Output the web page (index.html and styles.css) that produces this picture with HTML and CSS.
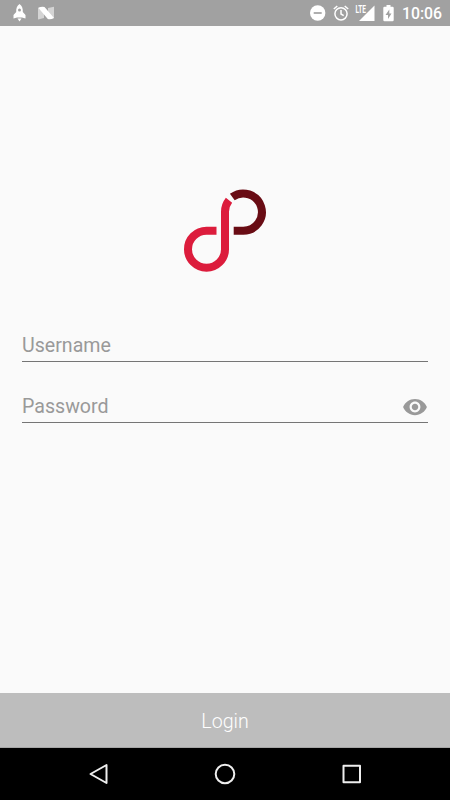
FILE: index.html
```html
<!DOCTYPE html>
<html lang="en">
<head>
  <meta charset="UTF-8" />
  <meta name="viewport" content="width=device-width, initial-scale=1.0"/>
  <title>Login</title>
  <link rel="stylesheet" href="styles.css">
</head>
<body>
  <header class="status-bar">
    <div class="notifications">
      <svg width="14" height="18" viewBox="0 0 14 18" fill="#fff">
        <path fill-rule="evenodd" d="M6.500 0C4 1.500 3 4.500 3.200 8L.5 11V14.500L4 13.500H9L12.500 14.500V11L9.800 8C10 4.500 9 1.500 6.500 0ZM6.500 4.500a1.500 1.500 0 1 1 0 3a1.500 1.500 0 0 1 0-3Z"/>
        <path d="M4.500 14.500H8.500L6.500 17.500Z"/>
      </svg>
      <svg width="17" height="14" viewBox="0 0 17 14">
        <path fill="#d4d4d4" d="M0 2L6 1V12L0 13.500ZM10 2L16 .8V12L10 13Z"/>
        <path fill="#fff" d="M.3 1.800Q3.500 .2 6.500 1L16 12Q12.500 14 9.800 13Z"/>
      </svg>
    </div>
    <div class="system">
      <svg width="16" height="16" viewBox="0 0 16 16">
        <circle cx="7.700" cy="8" r="7.700" fill="#fff"/>
        <path d="M3.700 8H11.700" stroke="#a1a1a1" stroke-width="1.700"/>
      </svg>
      <svg class="alarm" width="16" height="16" viewBox="0 0 16 16" fill="none" stroke="#fff" stroke-width="1.500">
        <circle cx="8" cy="8.800" r="6.100"/>
        <path d="M.8 4L4.300 1M15.200 4L11.700 1M8 5V9L10.700 10.700"/>
      </svg>
      <svg class="signal" width="20" height="17" viewBox="0 0 20 17" fill="#fff">
        <path d="M19.500 .5V16H4Z"/>
        <path class="halo" d="M0 0H11V9H0Z"/>
        <text class="lte" x="0.500" y="8" textLength="10.500" lengthAdjust="spacingAndGlyphs">LTE</text>
      </svg>
      <svg class="battery" width="11" height="17" viewBox="0 0 11 17">
        <path fill="#fff" d="M3.500 0H7.500V1.800H9.500Q10.700 1.800 10.700 3V15Q10.700 16.200 9.500 16.200H1.500Q.3 16.200 .3 15V3Q.3 1.800 1.500 1.800H3.500Z"/>
        <path fill="#a1a1a1" d="M6.300 4.500L2.500 10H5V14L8.500 8.500H6.300Z"/>
      </svg>
      <span class="clock">10:06</span>
    </div>
  </header>

  <main class="content">
    <svg class="logo" width="100" height="100" viewBox="0 0 100 100" fill="none" stroke-width="8">
      <path stroke="#dc1c3c" d="M41.500 50.700H31.500A18.500 18.500 0 1 0 50 69.200V31.800A18.500 18.500 0 0 1 54 20.300"/>
      <path stroke="#690c14" d="M58.700 50.700H68.200A18.600 18.600 0 1 0 57.300 17.100"/>
    </svg>

    <form class="login-form" id="loginForm">
      <div class="field">
        <input type="text" placeholder="Username" aria-label="Username">
      </div>
      <div class="field">
        <input type="password" placeholder="Password" aria-label="Password">
        <svg class="eye" width="26" height="26" viewBox="0 0 24 24" fill="#999">
          <path d="M12 4.500C7 4.500 2.730 7.610 1 12c1.730 4.390 6 7.500 11 7.500s9.270-3.110 11-7.500c-1.730-4.390-6-7.500-11-7.500zM12 17c-2.760 0-5-2.240-5-5s2.240-5 5-5 5 2.240 5 5-2.240 5-5 5zm0-8c-1.660 0-3 1.340-3 3s1.340 3 3 3 3-1.340 3-3-1.340-3-3-3z"/>
        </svg>
      </div>
    </form>
  </main>

  <button class="login-btn" type="submit" form="loginForm">Login</button>

  <nav class="nav-bar">
    <svg width="22" height="22" viewBox="0 0 22 22"><path d="M18.500 2V20L2.500 11Z"/></svg>
    <svg width="22" height="22" viewBox="0 0 22 22"><circle cx="11" cy="11" r="9.300"/></svg>
    <svg width="22" height="22" viewBox="0 0 22 22"><path d="M3.500 2.800H20V19.300H3.500Z"/></svg>
  </nav>
</body>
</html>
```
FILE: styles.css
```css
* {
  box-sizing: border-box;
}
body {
  margin: 0;
  height: 800px;
  display: flex;
  flex-direction: column;
  background-color: #fafafa;
  font-family: Roboto, sans-serif;
  overflow: hidden;
}
svg {
  display: block;
  flex: none;
}

/* Status bar */
.status-bar {
  height: 26px;
  padding: 0 8px 0 13px;
  display: flex;
  justify-content: space-between;
  align-items: center;
  background-color: #a1a1a1;
  color: white;
}
.notifications {
  display: flex;
  align-items: center;
  gap: 11px;
}
.system {
  display: flex;
  align-items: center;
}
.alarm {
  margin-left: 7px;
}
.signal {
  margin-left: 6px;
}
.halo {
  fill: #a1a1a1;
}
.lte {
  font-size: 10px;
  font-weight: bold;
}
.battery {
  margin-left: 8px;
}
.clock {
  margin-left: 8px;
  padding-top: 2px;
  font-size: 15.8px;
  font-weight: 500;
  line-height: 24px;
  width: 40px;
  white-space: nowrap;
}

/* Login form */
.content {
  flex: 1;
  padding: 154px 22px 0;
}
.logo {
  margin: 0 auto;
}
.login-form {
  margin-top: 50px;
}
.field {
  display: flex;
  align-items: center;
  height: 32px;
  margin-bottom: 29px;
  border-bottom: 1px solid #757575;
}
.field input {
  flex: 1;
  min-width: 0;
  height: 31px;
  padding: 0;
  border: none;
  outline: none;
  background: none;
  color: #212121;
  font-family: inherit;
  font-size: 19.6px;
}
.field input::placeholder {
  color: #999;
  opacity: 1;
}
.login-btn {
  height: 55px;
  padding: 2px 0 0;
  border: none;
  border-bottom: 1px solid #a5a5a5;
  background-color: #bdbdbd;
  color: white;
  font-family: inherit;
  font-size: 19.6px;
  font-weight: 300;
  cursor: pointer;
}

/* Navigation bar */
.nav-bar {
  height: 52px;
  padding: 0 88px;
  display: flex;
  justify-content: space-between;
  align-items: center;
  background-color: black;
}
.nav-bar svg {
  fill: none;
  stroke: #eee;
  stroke-width: 2;
  stroke-linejoin: round;
}
```
